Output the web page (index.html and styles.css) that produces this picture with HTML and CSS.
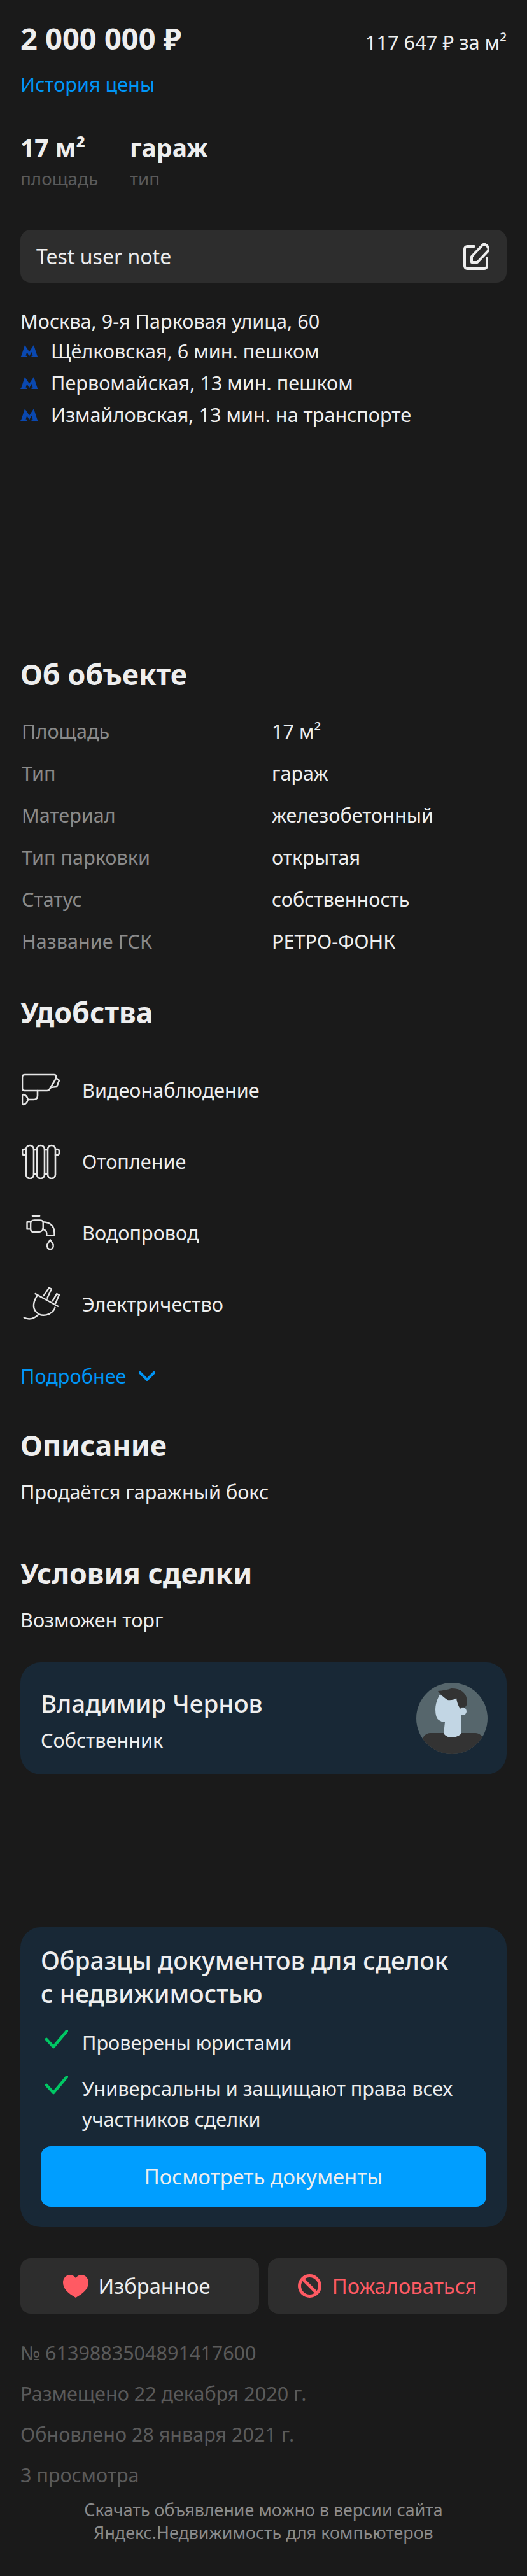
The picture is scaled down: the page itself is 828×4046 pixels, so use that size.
FILE: index.html
```html
<!DOCTYPE html>
<html lang="ru">
<head>
    <meta charset="UTF-8">
    <meta name="viewport" content="width=device-width, initial-scale=1.0">
    <title>Гараж, 17 м²</title>
    <link rel="stylesheet" href="styles.css">
</head>
<body>
    <div class="price-row">
        <div class="price">2 000 000 ₽</div>
        <div class="price-per">117 647 ₽ за м²</div>
    </div>
    <a class="link history" href="#">История цены</a>

    <div class="stats">
        <div>
            <div class="stat-value">17 м²</div>
            <div class="stat-label">площадь</div>
        </div>
        <div>
            <div class="stat-value">гараж</div>
            <div class="stat-label">тип</div>
        </div>
    </div>

    <div class="note">
        <span>Test user note</span>
        <svg class="note-icon" viewBox="0 0 40 42" fill="none" stroke="#eee" stroke-width="4" stroke-linecap="round" stroke-linejoin="round">
            <path d="M17 5H6a4 4 0 0 0-4 4v27a4 4 0 0 0 4 4h27a4 4 0 0 0 4-4V23"/>
            <path d="M13 30h9L38 13c3-3 2-6-1-9s-6-3-8 0L13 21z"/>
        </svg>
    </div>

    <div class="address">Москва, 9-я Парковая улица, 60</div>
    <div class="metro">
        <svg class="metro-icon" viewBox="0 0 28 19"><path d="M0 19l1.5-2.2L7 0l7 10.5L21 0l5.500 16.800L28 19H17.500v-2.200h2L17.700 11 14 17.500 10.300 11 8.500 16.800h2V19z"/></svg>
        Щёлковская, 6 мин. пешком
    </div>
    <div class="metro">
        <svg class="metro-icon" viewBox="0 0 28 19"><path d="M0 19l1.5-2.2L7 0l7 10.5L21 0l5.500 16.800L28 19H17.500v-2.200h2L17.700 11 14 17.500 10.300 11 8.500 16.800h2V19z"/></svg>
        Первомайская, 13 мин. пешком
    </div>
    <div class="metro">
        <svg class="metro-icon" viewBox="0 0 28 19"><path d="M0 19l1.5-2.2L7 0l7 10.5L21 0l5.500 16.800L28 19H17.500v-2.200h2L17.700 11 14 17.500 10.300 11 8.500 16.800h2V19z"/></svg>
        Измайловская, 13 мин. на транспорте
    </div>

    <div class="map-slot"></div>

    <h2 class="heading">Об объекте</h2>
    <div class="facts">
        <div class="fact"><span class="fact-name">Площадь</span><span>17 м²</span></div>
        <div class="fact"><span class="fact-name">Тип</span><span>гараж</span></div>
        <div class="fact"><span class="fact-name">Материал</span><span>железобетонный</span></div>
        <div class="fact"><span class="fact-name">Тип парковки</span><span>открытая</span></div>
        <div class="fact"><span class="fact-name">Статус</span><span>собственность</span></div>
        <div class="fact"><span class="fact-name">Название ГСК</span><span>РЕТРО-ФОНК</span></div>
    </div>

    <h2 class="heading amenities-title">Удобства</h2>
    <div class="amenities">
        <div class="amenity">
            <svg class="amenity-icon" viewBox="34 24 60 56">
                <path d="M39 28h46q3 0 3 3v3l-9 15q-2 4-5 4H39q-4 0-4-4V32q0-4 4-4z"/>
                <path d="M88 33l5 4-4 10-9 1"/>
                <path d="M59 53v8q0 6-6 6H43"/>
                <path d="M37 59q-2 0-2 3v10q0 3 2 3 5-1 7-8-2-7-7-8z"/>
            </svg>
            <span>Видеонаблюдение</span>
        </div>
        <div class="amenity">
            <svg class="amenity-icon" viewBox="34 130 60 56">
                <rect x="41" y="133" width="12" height="52" rx="6"/>
                <rect x="58" y="133" width="12" height="52" rx="6"/>
                <rect x="75" y="133" width="12" height="52" rx="6"/>
                <path d="M53 140h5M70 140h5M53 178h5M70 178h5"/>
                <path d="M41 139h-3q-3 0-3 4v1q0 4 3 4h3M87 139h3q3 0 3 4v1q0 4-3 4h-3"/>
            </svg>
            <span>Отопление</span>
        </div>
        <div class="amenity">
            <svg class="amenity-icon" viewBox="34 241 60 60">
                <path d="M50 243h12"/>
                <path d="M41 253h6M41 265h6M41 253v12"/>
                <path d="M47 256q0-6 6-6h9q6 0 6 4v12q-3 4-9 4h-6q-6 0-6-5z"/>
                <path d="M68 253q19 1 19 19v4H74v-4q0-5-7-7"/>
                <path d="M80 283l5 8q1 8-5 8t-5-8z"/>
            </svg>
            <span>Водопровод</span>
        </div>
        <div class="amenity">
            <svg class="amenity-icon" viewBox="34 352 60 60">
                <path d="M55 365l38 21"/>
                <path d="M69 368l9-13 4 2-7 15M84 377l7-12 4 2-6 14"/>
                <path d="M58 368q-10 16-3 26 9 11 23 5 9-5 10-11"/>
                <path d="M36 405q12 6 24-5"/>
            </svg>
            <span>Электричество</span>
        </div>
    </div>
    <a class="link more" href="#">
        Подробнее
        <svg class="chevron" viewBox="0 0 26 15" fill="none" stroke="#0095f6" stroke-width="4" stroke-linecap="round" stroke-linejoin="round"><path d="M2 2l11 11L24 2"/></svg>
    </a>

    <h2 class="heading desc-title">Описание</h2>
    <p class="text desc-text">Продаётся гаражный бокс</p>

    <h2 class="heading deal-title">Условия сделки</h2>
    <p class="text desc-text">Возможен торг</p>

    <div class="card owner">
        <div class="owner-text">
            <div class="owner-name">Владимир Чернов</div>
            <div class="owner-role">Собственник</div>
        </div>
        <svg class="avatar" viewBox="0 0 112 112">
            <defs><clipPath id="round"><circle cx="56" cy="56" r="56"/></clipPath></defs>
            <circle cx="56" cy="56" r="56" fill="#56666c"/>
            <g clip-path="url(#round)">
                <rect x="10" y="79" width="95" height="50" rx="12" fill="#333"/>
                <path d="M36 20Q30 32 30 42q0 14 6 17 4 3 9 3l-2 18q5 6 12 6 9 0 16-6l-1-27 4-7-8-25z" fill="#c2d6e4"/>
                <circle cx="73" cy="45" r="6" fill="#c2d6e4"/>
                <path d="M34 13q12-1 21-4 24 0 25 21 0 6-4 9-4-2-7 2-5-8-6-17-5 4-14 3-9-6-15-14z" fill="#333"/>
            </g>
        </svg>
    </div>

    <div class="card docs">
        <div class="docs-title">Образцы документов для сделок<br>с недвижимостью</div>
        <div class="docs-item docs-item-first">
            <svg class="check" viewBox="0 0 36 30" fill="none" stroke="#00c864" stroke-width="4.500" stroke-linecap="round" stroke-linejoin="round"><path d="M2 15l11 12L34 2"/></svg>
            <span>Проверены юристами</span>
        </div>
        <div class="docs-item">
            <svg class="check" viewBox="0 0 36 30" fill="none" stroke="#00c864" stroke-width="4.500" stroke-linecap="round" stroke-linejoin="round"><path d="M2 15l11 12L34 2"/></svg>
            <span>Универсальны и защищают права всех участников сделки</span>
        </div>
        <button class="docs-button">Посмотреть документы</button>
    </div>

    <div class="actions">
        <button class="action action-fav">
            <svg class="heart" viewBox="0 0 40 36"><path d="M20 36C8 29 0 22 0 12 0 5 5 0 11 0c4 0 7 2 9 5 2-3 5-5 9-5 6 0 11 5 11 12 0 10-8 17-20 24z" fill="#ff5a63"/></svg>
            Избранное
        </button>
        <button class="action action-danger">
            <svg class="ban" viewBox="0 0 37 37" fill="none" stroke="#ff5a63" stroke-width="5"><circle cx="18.500" cy="18.500" r="16"/><path d="M7 7l23 23"/></svg>
            Пожаловаться
        </button>
    </div>

    <div class="meta-list">
        <div class="meta">№ 6139883504891417600</div>
        <div class="meta">Размещено 22 декабря 2020 г.</div>
        <div class="meta">Обновлено 28 января 2021 г.</div>
        <div class="meta">3 просмотра</div>
    </div>

    <div class="footer">Скачать объявление можно в версии сайта<br>Яндекс.Недвижимость для компьютеров</div>
</body>
</html>
```

FILE: styles.css
```css
body{
    margin: 0;
    padding: 0 32px 48px;
    background-color: #1a1a1a;
    color: #eeeeee;
    font-family: "Noto Sans", "Open Sans", sans-serif;
    font-size: 30.600px;
}
.price-row{
    display: flex;
    justify-content: space-between;
    align-items: baseline;
    padding-top: 32px;
    height: 56px;
    line-height: 56px;
}
.price{
    font-size: 47px;
    font-weight: 700;
}
.price-per{
    font-size: 30.800px;
}
.link{
    color: #0095f6;
    text-decoration: none;
}
.history{
    display: block;
    margin-top: 24px;
    line-height: 40px;
}
.stats{
    display: flex;
    gap: 50px;
    margin-top: 56px;
    padding-bottom: 20px;
    border-bottom: 1px solid #3a3a3a;
}
.stat-value{
    font-size: 39px;
    font-weight: 700;
    line-height: 48px;
}
.stat-label{
    margin-top: 4px;
    font-size: 27.800px;
    line-height: 40px;
    color: #5a5a5a;
}
.note{
    display: flex;
    align-items: center;
    justify-content: space-between;
    height: 83px;
    margin-top: 40px;
    padding: 0 28px 0 25px;
    background-color: #2d2d2d;
    border-radius: 16px;
    font-size: 32px;
}
.note-icon{
    width: 40px;
    height: 42px;
}
.address{
    margin-top: 38px;
    line-height: 44px;
}
.metro{
    display: flex;
    align-items: center;
    gap: 20px;
    height: 50px;
}
.metro-icon{
    width: 28px;
    height: 19px;
    fill: #0a48b0;
}
.map-slot{
    height: 355px;
}
.heading{
    margin: 0;
    font-size: 44.800px;
    font-weight: 700;
    line-height: 56px;
}
.facts{
    margin-top: 28px;
}
.fact{
    display: grid;
    grid-template-columns: 395px 1fr;
    align-items: center;
    height: 66px;
}
.fact-name{
    padding-left: 2px;
    color: #8a8a8a;
}
.amenities-title{
    margin-top: 51px;
}
.amenities{
    margin-top: 38px;
}
.amenity{
    display: flex;
    align-items: center;
    gap: 35px;
    height: 112px;
}
.amenity-icon{
    width: 60px;
    height: 56px;
    margin-left: 2px;
    fill: none;
    stroke: #e6e6e6;
    stroke-width: 2.600;
    stroke-linecap: round;
    stroke-linejoin: round;
}
.more{
    display: flex;
    align-items: center;
    gap: 20px;
    margin-top: 37px;
    line-height: 40px;
}
.chevron{
    width: 26px;
    height: 15px;
}
.desc-title{
    margin-top: 61px;
}
.text{
    margin: 0;
    line-height: 40px;
}
.desc-text{
    margin-top: 25px;
}
.deal-title{
    margin-top: 80px;
}
.card{
    background-color: #182836;
    border-radius: 32px;
}
.owner{
    display: flex;
    align-items: center;
    justify-content: space-between;
    height: 176px;
    margin-top: 47px;
    padding: 0 30px 0 32px;
}
.owner-text{
    padding-top: 6px;
}
.owner-name{
    font-size: 38.600px;
    font-weight: 500;
    line-height: 48px;
}
.owner-role{
    margin-top: 14px;
    line-height: 40px;
}
.avatar{
    width: 112px;
    height: 112px;
}
.docs{
    margin-top: 240px;
    padding: 26px 32px 32px;
}
.docs-title{
    font-size: 39px;
    font-weight: 500;
    line-height: 52px;
}
.docs-item{
    display: flex;
    align-items: flex-start;
    gap: 22px;
    margin-top: 24px;
    padding-left: 7px;
    line-height: 48px;
}
.docs-item-first{
    margin-top: 27px;
}
.check{
    flex: none;
    width: 36px;
    height: 30px;
    margin-top: 4px;
}
.docs-button{
    display: block;
    width: 100%;
    height: 95px;
    margin-top: 19px;
    border: none;
    border-radius: 16px;
    background-color: #009eff;
    color: #eeeeee;
    font: inherit;
    font-size: 32.700px;
}
.actions{
    display: grid;
    grid-template-columns: 1fr 1fr;
    gap: 14px;
    margin-top: 49px;
}
.action{
    display: flex;
    align-items: center;
    justify-content: center;
    gap: 16px;
    height: 87px;
    border: none;
    border-radius: 16px;
    background-color: #2d2d2d;
    color: #eeeeee;
    font: inherit;
    font-size: 32.700px;
}
.action-fav{
    padding-right: 16px;
}
.action-danger{
    color: #ff5a63;
    gap: 17px;
}
.heart{
    width: 40px;
    height: 36px;
}
.ban{
    width: 37px;
    height: 37px;
}
.meta-list{
    margin-top: 29px;
}
.meta{
    height: 64px;
    line-height: 64px;
    font-size: 30.500px;
    color: #5a5a5a;
}
.footer{
    margin-top: 5px;
    font-size: 26.800px;
    line-height: 36px;
    text-align: center;
    color: #8a8a8a;
}
```
